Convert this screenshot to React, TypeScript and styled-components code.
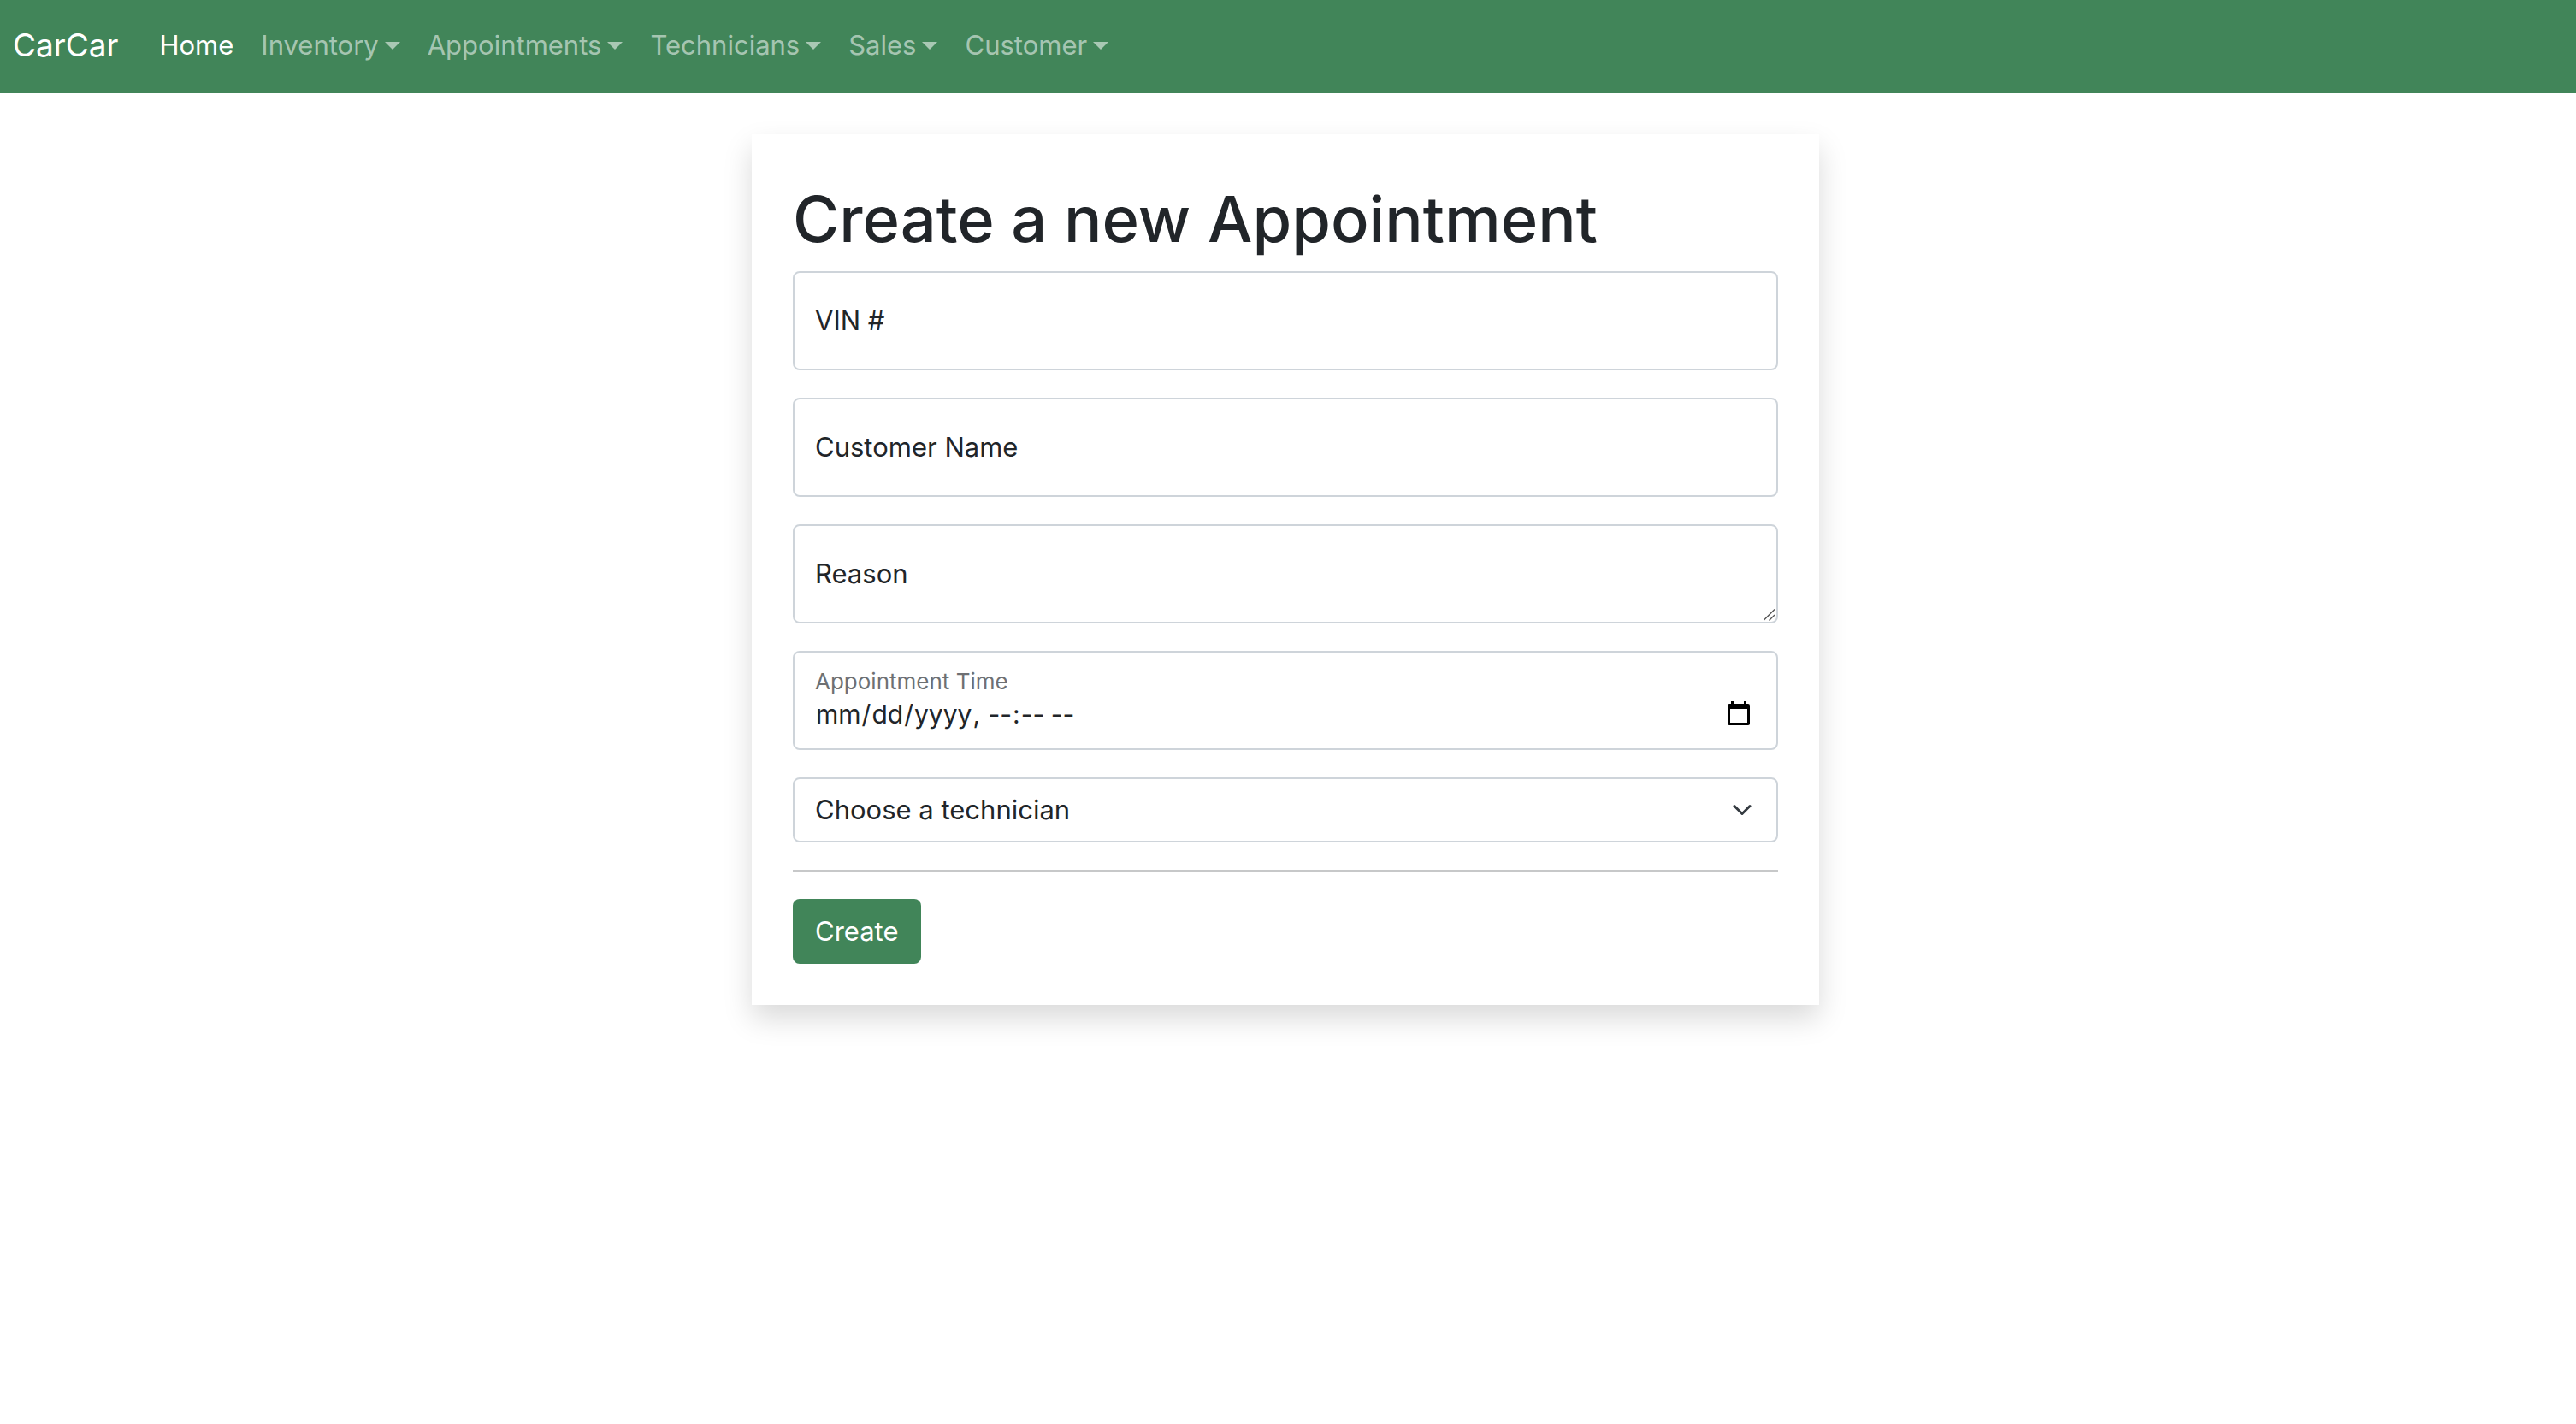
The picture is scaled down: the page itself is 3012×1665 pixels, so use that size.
import React from "react";
import styled, { createGlobalStyle, css } from "styled-components";

const green = "#418559";
const ink = "#212529";
const line = "#ced4da";

const svgUrl = (body: string, viewBox: string) =>
  `url("data:image/svg+xml,${encodeURIComponent(
    `<svg xmlns="http://www.w3.org/2000/svg" viewBox="${viewBox}">${body}</svg>`
  )}")`;

const chevron = svgUrl(
  '<path fill="none" stroke="#343a40" stroke-linecap="round" stroke-linejoin="round" stroke-width="2" d="M2 5l6 6 6-6"/>',
  "0 0 16 16"
);
const calendar = svgUrl(
  '<path fill-rule="evenodd" d="M11 5h3v3h12V5h3v3h2a2 2 0 0 1 2 2v21a2 2 0 0 1-2 2H9a2 2 0 0 1-2-2V10a2 2 0 0 1 2-2h2zM10 14v16h20V14z"/>',
  "0 0 40 40"
);
const grip = svgUrl(
  '<path fill="none" stroke="#555" stroke-width="1.4" d="M0 13.500L13 0.500M6.500 13.500L13 7"/>',
  "0 0 15 15"
);

const GlobalStyle = createGlobalStyle`
  *, *::before, *::after { box-sizing: border-box; }
  body {
    margin: 0;
    background: #fff;
    color: ${ink};
    font-family: Inter, "Liberation Sans", sans-serif;
    font-size: 31px;
    line-height: 48px;
  }
`;

const Navbar = styled.nav`
  display: flex;
  align-items: center;
  padding: 13px 15px 16px;
  background: ${green};
`;

const Brand = styled.a`
  margin-right: 32px;
  color: #fff;
  font-size: 37px;
  line-height: 60px;
  padding: 10px 0;
  text-decoration: none;
`;

const NavList = styled.ul`
  display: flex;
  flex-wrap: wrap;
  margin: 0;
  padding: 0;
  list-style: none;
`;

const NavLink = styled.a<{ $active?: boolean }>`
  display: flex;
  align-items: center;
  gap: 7px;
  padding: 16px;
  color: ${(p) => (p.$active ? "#fff" : "rgba(255, 255, 255, 0.55)")};
  text-decoration: none;
`;

const Caret = styled.span`
  border-top: 9px solid;
  border-left: 9px solid transparent;
  border-right: 9px solid transparent;
`;

const Main = styled.main`
  display: flex;
  justify-content: center;
  padding: 48px 6px 48px 0;
`;

const Card = styled.section`
  width: 100%;
  max-width: 1248px;
  padding: 48px;
  background: #fff;
  box-shadow: 0 16px 32px rgba(0, 0, 0, 0.15);
`;

const Title = styled.h1`
  margin: 0 0 10px;
  font-size: 74px;
  font-weight: 500;
  line-height: 102px;
`;

const Form = styled.form`
  display: flex;
  flex-direction: column;
  align-items: stretch;
  gap: 32px;
`;

const Field = styled.div`
  display: grid;

  > * {
    grid-area: 1 / 1;
  }
`;

const FieldLabel = styled.label<{ $floated?: boolean }>`
  z-index: 1;
  align-self: center;
  padding: 0 26px;
  pointer-events: none;
  ${(p) =>
    p.$floated &&
    css`
      align-self: start;
      padding-top: 12px;
      font-size: 26px;
      opacity: 0.65;
    `}
`;

const control = css`
  width: 100%;
  margin: 0;
  border: 2px solid ${line};
  border-radius: 8px;
  background-color: #fff;
  color: ${ink};
  font: inherit;
  outline: none;

  &:focus {
    border-color: ${green};
  }
`;

const TextInput = styled.input`
  ${control}
  height: 116px;
  padding: 32px 24px;
`;

const DateInput = styled.input`
  ${control}
  height: 116px;
  padding: 52px 24px 20px;
  font-size: 30px;
  line-height: 40px;

  &::-webkit-datetime-edit {
    padding: 0;
    line-height: 40px;
  }
  &::-webkit-datetime-edit-fields-wrapper {
    padding: 0;
  }
  &::-webkit-calendar-picker-indicator {
    width: 40px;
    height: 40px;
    margin: 0;
    padding: 0;
    background: ${calendar} center / 40px 40px no-repeat;
  }
`;

const TextArea = styled.textarea`
  ${control}
  display: block;
  height: 116px;
  padding: 32px 24px;
  resize: vertical;

  &::-webkit-resizer {
    background: ${grip} right bottom / 15px 15px no-repeat;
  }
`;

const Select = styled.select`
  ${control}
  height: 76px;
  padding: 12px 72px 12px 24px;
  appearance: none;
  background-image: ${chevron};
  background-repeat: no-repeat;
  background-position: right 24px center;
  background-size: 32px 24px;
`;

const Divider = styled.hr`
  width: 100%;
  height: 2px;
  margin: 0;
  border: 0;
  background: ${ink};
  opacity: 0.25;
`;

const SubmitButton = styled.button`
  align-self: flex-start;
  padding: 12px 24px;
  border: 2px solid ${green};
  border-radius: 8px;
  background: ${green};
  color: #fff;
  font: inherit;
  cursor: pointer;
`;

const menus = ["Inventory", "Appointments", "Technicians", "Sales", "Customer"];

export default function App() {
  return (
    <>
      <GlobalStyle />
      <Navbar>
        <Brand href="#">CarCar</Brand>
        <NavList>
          <li>
            <NavLink href="#" $active aria-current="page">
              Home
            </NavLink>
          </li>
          {menus.map((name) => (
            <li key={name}>
              <NavLink href="#" aria-haspopup="true">
                {name}
                <Caret />
              </NavLink>
            </li>
          ))}
        </NavList>
      </Navbar>
      <Main>
        <Card>
          <Title>Create a new Appointment</Title>
          <Form onSubmit={(e) => e.preventDefault()}>
            <Field>
              <TextInput id="vin" type="text" />
              <FieldLabel htmlFor="vin">VIN #</FieldLabel>
            </Field>
            <Field>
              <TextInput id="customer" type="text" />
              <FieldLabel htmlFor="customer">Customer Name</FieldLabel>
            </Field>
            <Field>
              <TextArea id="reason" />
              <FieldLabel htmlFor="reason">Reason</FieldLabel>
            </Field>
            <Field>
              <DateInput id="time" type="datetime-local" />
              <FieldLabel htmlFor="time" $floated>
                Appointment Time
              </FieldLabel>
            </Field>
            <Select aria-label="Technician" defaultValue="">
              <option value="">Choose a technician</option>
            </Select>
            <Divider />
            <SubmitButton type="submit">Create</SubmitButton>
          </Form>
        </Card>
      </Main>
    </>
  );
}
